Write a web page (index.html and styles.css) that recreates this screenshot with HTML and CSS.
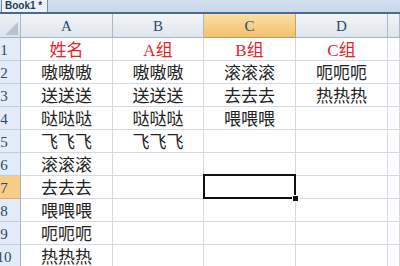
FILE: index.html
```html
<!DOCTYPE html>
<html lang="zh">
  <head>
    <meta charset="UTF-8" />
    <title>Book1</title>
    <link rel="stylesheet" href="styles.css">
  </head>
  <body>
    <div class="tabbar">
      <div class="tab">Book1 *</div>
    </div>

    <div class="sheet">
      <!-- column headers -->
      <div class="corner"><span class="corner-tri"></span></div>
      <div class="col-head">A</div>
      <div class="col-head">B</div>
      <div class="col-head active">C</div>
      <div class="col-head">D</div>
      <div class="col-head"></div>

      <div class="row-head">1</div>
      <div class="cell red">姓名</div>
      <div class="cell red">A组</div>
      <div class="cell red">B组</div>
      <div class="cell red">C组</div>
      <div class="cell"></div>

      <div class="row-head">2</div>
      <div class="cell">嗷嗷嗷</div>
      <div class="cell">嗷嗷嗷</div>
      <div class="cell">滚滚滚</div>
      <div class="cell">呃呃呃</div>
      <div class="cell"></div>

      <div class="row-head">3</div>
      <div class="cell">送送送</div>
      <div class="cell">送送送</div>
      <div class="cell">去去去</div>
      <div class="cell">热热热</div>
      <div class="cell"></div>

      <div class="row-head">4</div>
      <div class="cell">哒哒哒</div>
      <div class="cell">哒哒哒</div>
      <div class="cell">喂喂喂</div>
      <div class="cell"></div>
      <div class="cell"></div>

      <div class="row-head">5</div>
      <div class="cell">飞飞飞</div>
      <div class="cell">飞飞飞</div>
      <div class="cell"></div>
      <div class="cell"></div>
      <div class="cell"></div>

      <div class="row-head">6</div>
      <div class="cell">滚滚滚</div>
      <div class="cell"></div>
      <div class="cell"></div>
      <div class="cell"></div>
      <div class="cell"></div>

      <div class="row-head active">7</div>
      <div class="cell">去去去</div>
      <div class="cell"></div>
      <div class="cell selected"><span class="fill-handle"></span></div>
      <div class="cell"></div>
      <div class="cell"></div>

      <div class="row-head">8</div>
      <div class="cell">喂喂喂</div>
      <div class="cell"></div>
      <div class="cell"></div>
      <div class="cell"></div>
      <div class="cell"></div>

      <div class="row-head">9</div>
      <div class="cell">呃呃呃</div>
      <div class="cell"></div>
      <div class="cell"></div>
      <div class="cell"></div>
      <div class="cell"></div>

      <div class="row-head">10</div>
      <div class="cell">热热热</div>
      <div class="cell"></div>
      <div class="cell"></div>
      <div class="cell"></div>
      <div class="cell"></div>
    </div>
  </body>
</html>
```

FILE: styles.css
```css
body {
  margin: 0;
  padding: 0;
  width: 400px;
  height: 266px;
  overflow: hidden;
  background: #fff;
  font-family: "Liberation Serif", "Noto Sans CJK SC", serif;
}

.tabbar {
  height: 12px;
  background: linear-gradient(#d6e2f1, #c7d6ea);
  border-bottom: 2px solid #4a6a96;
  display: flex;
  align-items: flex-end;
}

.tab {
  margin-left: 1px;
  width: 47px;
  height: 12px;
  box-sizing: border-box;
  padding-left: 3px;
  background: #eef3fa;
  border-left: 1px solid #6e8fbc;
  border-right: 1px solid #6e8fbc;
  font-family: "Liberation Sans", sans-serif;
  font-size: 10px;
  font-weight: bold;
  line-height: 11px;
  color: #1f3a60;
  white-space: nowrap;
}

.sheet {
  display: grid;
  grid-template-columns: 21px 92px 91px 92px 92px 12px;
  grid-template-rows: 24px repeat(10, 23px);
}

.corner {
  position: relative;
  background: linear-gradient(#edf1f6, #dde3eb);
  border-right: 1px solid #a9b8cb;
  border-bottom: 1px solid #9eb6ce;
}

.corner-tri {
  position: absolute;
  right: 2px;
  bottom: 2px;
  width: 0;
  height: 0;
  border-left: 13px solid transparent;
  border-bottom: 13px solid #b9c3cf;
}

.col-head {
  background: linear-gradient(#f3f5f8, #dfe5ec);
  border-right: 1px solid #a9b8cb;
  border-bottom: 1px solid #9eb6ce;
  color: #274b70;
  font-size: 15px;
  display: flex;
  align-items: center;
  justify-content: center;
  padding-top: 2px;
  box-sizing: border-box;
}

.col-head.active {
  background: linear-gradient(#fadfa6, #f3c06c);
  border-right-color: #c2a36b;
  border-bottom-color: #c29b5a;
}

.row-head {
  background: #e3ebf6;
  border-right: 1px solid #9eb6ce;
  border-bottom: 1px solid #bfcde0;
  color: #274b70;
  font-size: 15px;
  display: flex;
  align-items: center;
  justify-content: center;
  padding-right: 12px;
  padding-top: 2px;
  box-sizing: border-box;
  white-space: nowrap;
}

.row-head.active {
  background: #f7cd86;
  border-bottom-color: #d8b06a;
}

.cell {
  border-right: 1px solid #d5dae2;
  border-bottom: 1px solid #d5dae2;
  display: flex;
  align-items: center;
  justify-content: center;
  padding-top: 2px;
  box-sizing: border-box;
  font-size: 17px;
  line-height: 1;
  color: #222;
  white-space: nowrap;
}

.cell.red {
  color: #e8232c;
}

.cell.selected {
  position: relative;
}

.cell.selected::after {
  content: "";
  position: absolute;
  left: -1px;
  top: -2px;
  right: -1px;
  bottom: -1px;
  border: 2px solid #111;
}

.fill-handle {
  position: absolute;
  right: -4px;
  bottom: -4px;
  width: 5px;
  height: 5px;
  background: #111;
  border: 1px solid #fff;
  z-index: 2;
}
```
